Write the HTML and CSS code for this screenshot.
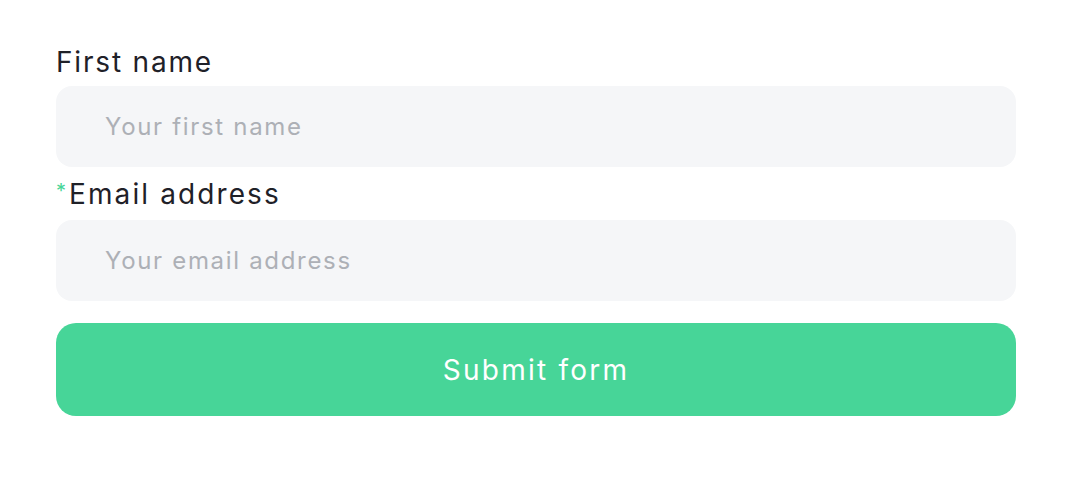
FILE: index.html
```html
<!DOCTYPE html>
<html lang="en">
<head>
    <meta charset="UTF-8">
    <title>Form</title>
    <link rel="stylesheet" href="styles.css">
</head>
<body>
    <form class="form" onsubmit="return false">
        <label class="label" for="firstName">First name</label>
        <input class="field" type="text" id="firstName" placeholder="Your first name">

        <label class="label label-email" for="email"><span class="req">*</span>Email address</label>
        <input class="field" type="email" id="email" placeholder="Your email address">

        <button class="submit-btn" type="submit">Submit form</button>
    </form>
</body>
</html>
```

FILE: styles.css
```css
body {
    margin: 0;
    background: #fff;
    font-family: "Inter", "Noto Sans", sans-serif;
}
.form {
    display: flex;
    flex-direction: column;
    width: 960px;
    padding: 42px 0 0 56px;
}
.label {
    font-size: 28px;
    line-height: 40px;
    letter-spacing: 0.065em;
    color: #1f2128;
    margin-bottom: 4px;
}
.label-email {
    margin-top: 4px;
    margin-bottom: 6px;
    letter-spacing: 0.075em;
}
.req {
    color: #47d597;
    font-size: 20px;
    vertical-align: 6px;
    letter-spacing: 0;
    margin-right: 3px;
}
.field {
    height: 81px;
    box-sizing: border-box;
    border: none;
    border-radius: 16px;
    background: #f5f6f8;
    padding: 0 49px;
    font-family: inherit;
    font-size: 24px;
    letter-spacing: 0.07em;
    color: #1f2128;
    outline: none;
}
.field::placeholder {
    color: #adb0b6;
}
.submit-btn {
    margin-top: 22px;
    height: 93px;
    border: none;
    border-radius: 20px;
    background: #47d598;
    color: #fff;
    font-family: inherit;
    font-size: 28px;
    letter-spacing: 0.08em;
    cursor: pointer;
}
```
